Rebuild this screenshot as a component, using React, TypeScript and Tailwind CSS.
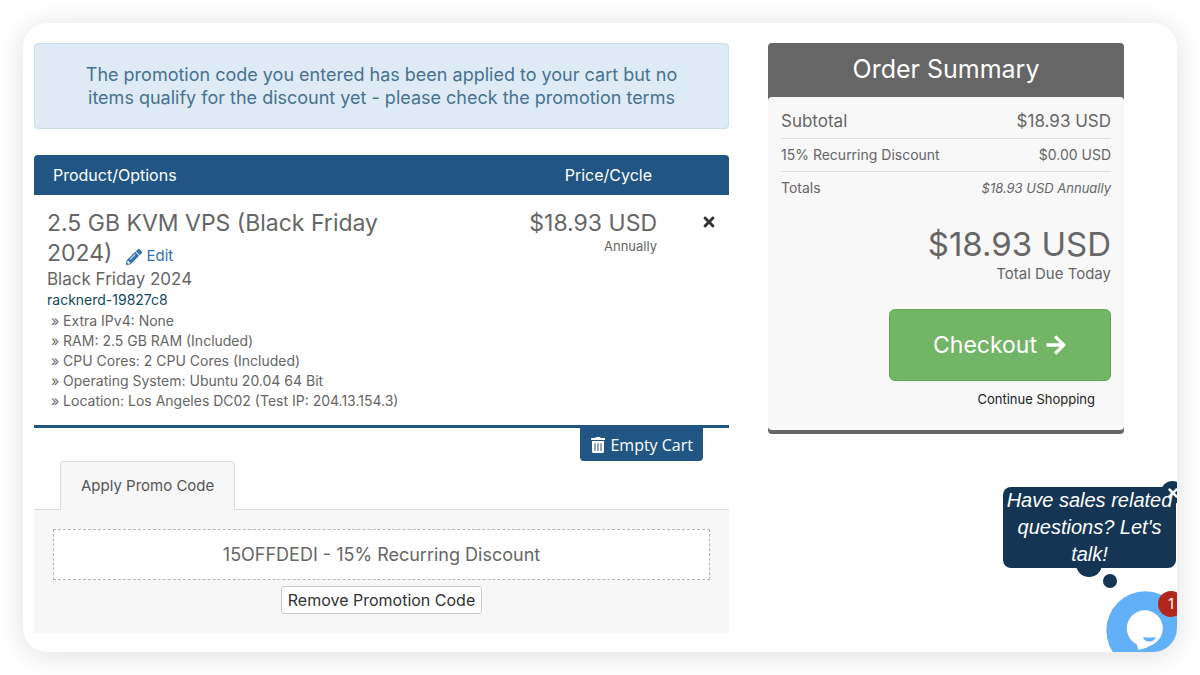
import { FaPencilAlt, FaTimes, FaTrashAlt, FaArrowRight } from "react-icons/fa";

const options = [
  "Extra IPv4: None",
  "RAM: 2.5 GB RAM (Included)",
  "CPU Cores: 2 CPU Cores (Included)",
  "Operating System: Ubuntu 20.04 64 Bit",
  "Location: Los Angeles DC02 (Test IP: 204.13.154.3)",
];

function ProductTable() {
  return (
    <table className="w-full table-fixed border-b-3 border-[#215583] mt-[26px]">
      <thead>
        <tr className="h-10 text-white text-base">
          <th className="bg-[#215583] rounded-tl font-normal text-left pl-[19px]">
            Product/Options
          </th>
          <th className="bg-[#215583] w-[150px] font-normal text-right pr-[5px]">
            Price/Cycle
          </th>
          <th aria-label="Remove" className="bg-[#215583] rounded-tr w-[72px]" />
        </tr>
      </thead>
      <tbody>
        <tr className="align-top">
          <td className="pl-[13px] pt-[13px] pb-[14px]">
            <h2 className="max-w-[360px] text-[23px] leading-[30px]">
              2.5 GB KVM VPS (Black Friday 2024)
              <a
                href="#edit"
                className="inline-block ml-[14px] text-[15px] leading-4 text-[#3572b0]"
              >
                <FaPencilAlt className="inline size-4 mr-1 align-text-bottom" />
                Edit
              </a>
            </h2>
            <p className="text-[17px] leading-[22px]">Black Friday 2024</p>
            <p className="text-sm leading-5 text-[#134a63]">racknerd-19827c8</p>
            <ul className="mt-px text-sm leading-5 pl-1">
              {options.map((option) => (
                <li key={option}>» {option}</li>
              ))}
            </ul>
          </td>
          <td className="pt-[13px] text-right">
            <p className="text-[23px] leading-[30px] whitespace-nowrap">
              $18.93 USD
            </p>
            <p className="text-[13px] leading-4">Annually</p>
          </td>
          <td className="pt-[17px] pl-[31px] text-center">
            <button aria-label="Remove item" className="text-[#333]">
              <FaTimes className="size-4" />
            </button>
          </td>
        </tr>
      </tbody>
    </table>
  );
}

function PromoCode() {
  return (
    <div>
      <div className="flex pl-[26px]">
        <button className="relative z-10 -mb-px h-[49px] px-5 text-[15px] rounded-t border border-b-0 border-[#d9dee2] bg-[#f7f7f7] text-[#555]">
          Apply Promo Code
        </button>
      </div>
      <div className="bg-[#f7f7f7] border-t border-[#ddd] px-[19px] pt-[19px] pb-[19px] text-center">
        <div className="h-[51px] flex items-center justify-center bg-white border border-dashed border-[#b5b5b5] text-[18px]">
          15OFFDEDI - 15% Recurring Discount
        </div>
        <button className="mt-[6px] h-7 px-[6px] text-base leading-6 rounded-[3px] border border-[#ccc] bg-white text-[#333]">
          Remove Promotion Code
        </button>
      </div>
    </div>
  );
}

function OrderSummary() {
  return (
    <aside className="w-[356px] shrink-0 self-start rounded bg-[#666] pb-1">
      <h2 className="h-[54px] flex items-center justify-center text-white text-[25px]">
        Order Summary
      </h2>
      <div className="rounded bg-[#f8f8f8] px-[13px] pt-2 pb-[21px]">
        <div className="flex items-center justify-between h-[33px] text-[17px]">
          <span>Subtotal</span>
          <span>$18.93 USD</span>
        </div>
        <div className="flex items-center justify-between h-[34px] text-sm border-y border-[#ddd]">
          <span>15% Recurring Discount</span>
          <span>$0.00 USD</span>
        </div>
        <div className="flex items-center justify-between h-8 text-sm">
          <span>Totals</span>
          <span className="italic text-[13px]">$18.93 USD Annually</span>
        </div>
        <div className="mt-5 text-right">
          <p className="text-[33px] leading-10">$18.93 USD</p>
          <p className="text-[15px] leading-5">Total Due Today</p>
        </div>
        <div className="mt-[25px] flex flex-col items-end">
          <button className="h-[72px] w-[222px] flex items-center justify-center gap-2 rounded-md border border-[#5fa851] bg-[#73b566] text-white text-[23px]">
            Checkout
            <FaArrowRight className="size-[22px]" />
          </button>
          <a href="#shop" className="mt-2 mr-4 text-[13px] leading-5 text-[#222]">
            Continue Shopping
          </a>
        </div>
      </div>
    </aside>
  );
}

function ChatWidget() {
  return (
    <div className="absolute right-0 bottom-0">
      <div className="absolute right-px bottom-[84px] w-[173px]">
        <span className="absolute left-[73px] -bottom-[9px] size-[26px] rounded-full bg-[#143553]" />
        <span className="absolute left-[100px] -bottom-5 size-[14px] rounded-full bg-[#143553]" />
        <button
          aria-label="Close message"
          className="absolute -top-[6px] -right-2 size-[23px] flex items-center justify-center rounded-full bg-[#143553] text-white"
        >
          <FaTimes className="size-[14px]" />
        </button>
        <p className="rounded-lg bg-[#143553] text-white text-center italic text-xl leading-[27px] font-['Liberation_Sans',Arial,sans-serif]">
          <span className="relative">Have sales related questions? Let's talk!</span>
        </p>
      </div>
      <button aria-label="Open chat" className="block relative">
        <svg width="72" height="62" viewBox="0 0 72 62" className="block">
          <circle cx="40.3" cy="40.3" r="39" fill="#62b0f8" />
          <circle cx="39.8" cy="38.3" r="18" fill="#fff" />
          <path d="M31 52L33.300 59.800Q42 58.500 50 53z" fill="#fff" />
          <path d="M38 47q6.300 1.200 12.700 0-1.300 4.500-6.300 4.500T38 47z" fill="#62b0f8" />
        </svg>
        <span className="absolute top-px -right-[7px] size-[26px] flex items-center justify-center rounded-full bg-[#b3261e] text-white text-sm">
          1
        </span>
      </button>
    </div>
  );
}

export default function App() {
  return (
    <main className="p-[23px] bg-white font-[Inter,'Open_Sans',sans-serif] text-[#666]">
      <div className="relative overflow-hidden rounded-3xl shadow-[0_3px_30px_rgba(0,0,0,0.13)] bg-white flex gap-[39px] pl-[11px] pr-[53px] pt-5 pb-[19px]">
        <div className="flex-1">
          <div className="rounded border border-[#c5e1ee] bg-[#deebf6] px-10 py-[19px] text-center text-[18px] leading-[23px] text-[#47728f]">
            The promotion code you entered has been applied to your cart but no
            items qualify for the discount yet - please check the promotion
            terms
          </div>
          <ProductTable />
          <div className="flex justify-end pr-[26px]">
            <button className="h-[33px] px-[10px] flex items-center gap-1 rounded-b bg-[#215583] text-white text-base font-['Open_Sans',sans-serif]">
              <FaTrashAlt className="size-4" />
              Empty Cart
            </button>
          </div>
          <PromoCode />
        </div>
        <OrderSummary />
        <ChatWidget />
      </div>
    </main>
  );
}
